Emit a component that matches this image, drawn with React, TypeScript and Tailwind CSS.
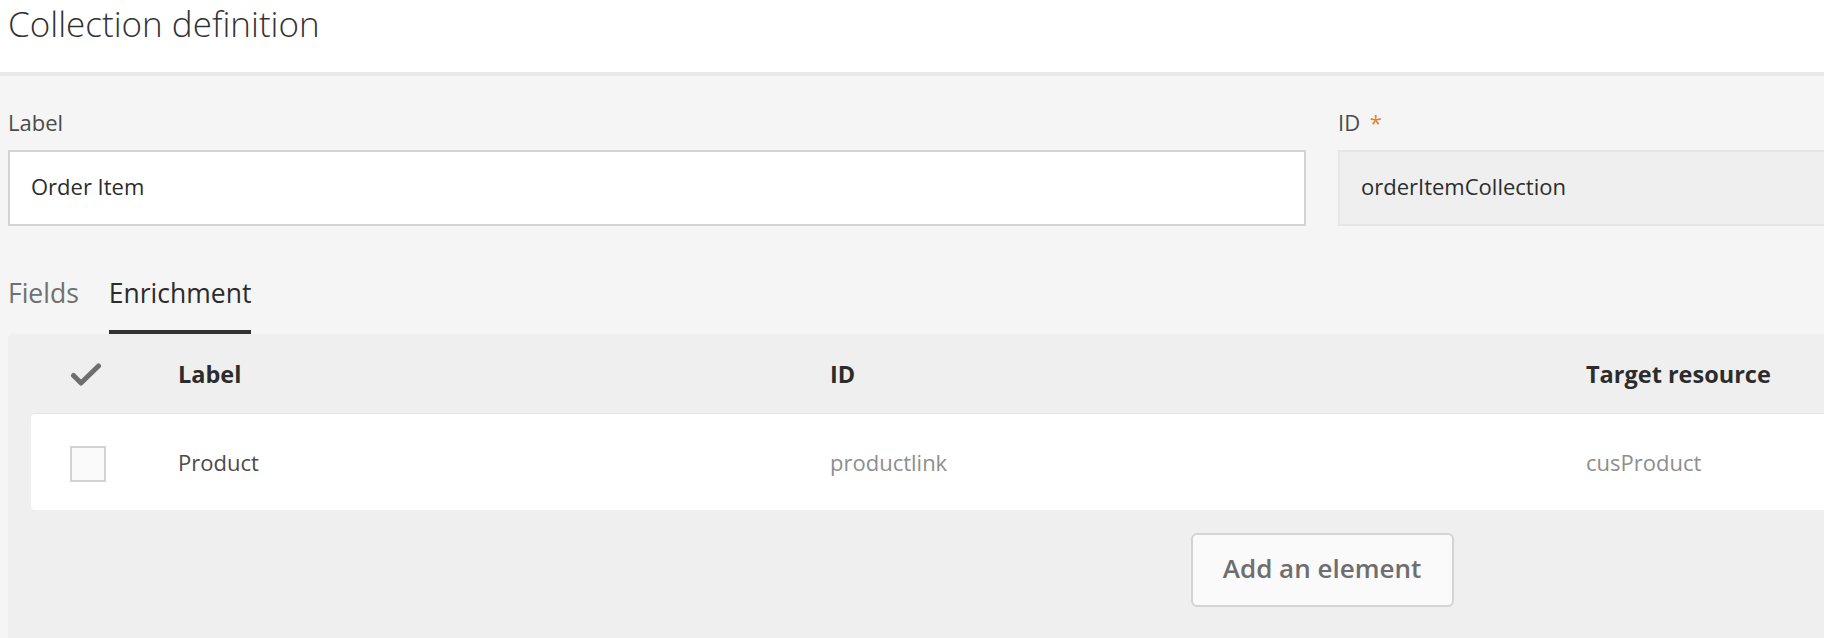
const CheckIcon = () => (
  <svg width="32" height="24" viewBox="0 0 32 24" fill="none">
    <path d="M3.5 12.5 L11 20 L28.5 3" stroke="#6e6e6e" strokeWidth="5" strokeLinecap="round" strokeLinejoin="round" />
  </svg>
);

const cols = "grid grid-cols-[147px_652px_756px_1fr] items-center";

const App = () => {
  return (
    <div className="h-[638px] w-full overflow-hidden bg-[#f5f5f5] font-['Open_Sans',sans-serif]">
      <div className="w-[2644px]">
        <div className="h-[76px] bg-white border-b-4 border-[#e8e8e8] px-2">
          <h1 className="text-[35px] leading-[48px] font-light text-[#323232]">Collection definition</h1>
        </div>

        <div className="px-2 pt-[31px] grid grid-cols-2 gap-[32px]">
          <div>
            <label className="block text-[22px] leading-[30px] text-[#4b4b4b] mb-[13px]">Label</label>
            <div className="h-[76px] bg-white border-2 border-[#d3d3d3] px-[21px] pb-[3px] flex items-center text-[22px] text-[#2c2c2c]">
              Order Item
            </div>
          </div>
          <div>
            <label className="block text-[22px] leading-[30px] text-[#4b4b4b] mb-[13px]">
              ID <span className="ml-[4px] text-[#e68619]">*</span>
            </label>
            <div className="h-[76px] bg-[#efefef] border-2 border-[#e6e6e6] px-[21px] pb-[3px] flex items-center text-[22px] text-[#2c2c2c]">
              orderItemCollection
            </div>
          </div>
        </div>

        <div className="px-2 mt-[49px] flex gap-[30px]">
          <div className="text-[26.5px] leading-[36px] pb-[23px] text-[#707070]">Fields</div>
          <div className="text-[26.5px] leading-[36px] pb-[19px] border-b-4 border-[#323232] text-[#2c2c2c]">Enrichment</div>
        </div>

        <div className="mx-2 bg-[#efefef] rounded-tl-[4px] pl-[23px] h-[400px]">
          <div className={`${cols} h-[79px] pt-[3px] text-[23.5px] font-bold text-[#2c2c2c]`}>
            <div className="pl-[39px]">
              <CheckIcon />
            </div>
            <div>Label</div>
            <div>ID</div>
            <div>Target resource</div>
          </div>

          <div className={`${cols} h-[97px] bg-white border-t border-[#e4e4e4] rounded-l-[4px] text-[22px]`}>
            <div className="pl-[39px] pt-[4px]">
              <div className="w-[36px] h-[36px] border-2 border-[#d3d3d3] bg-[#fafafa]" />
            </div>
            <div className="text-[#4b4b4b]">Product</div>
            <div className="text-[#8e8e8e]">productlink</div>
            <div className="text-[#8e8e8e]">cusProduct</div>
          </div>

          <div className="flex justify-center pt-[23px] -ml-[23px]">
            <button className="w-[263px] h-[74px] pb-[3px] rounded-[6px] border-2 border-[#d3d3d3] bg-[#fafafa] text-[26px] font-semibold text-[#6e6e6e]">
              Add an element
            </button>
          </div>
        </div>
      </div>
    </div>
  );
};

export default App;
